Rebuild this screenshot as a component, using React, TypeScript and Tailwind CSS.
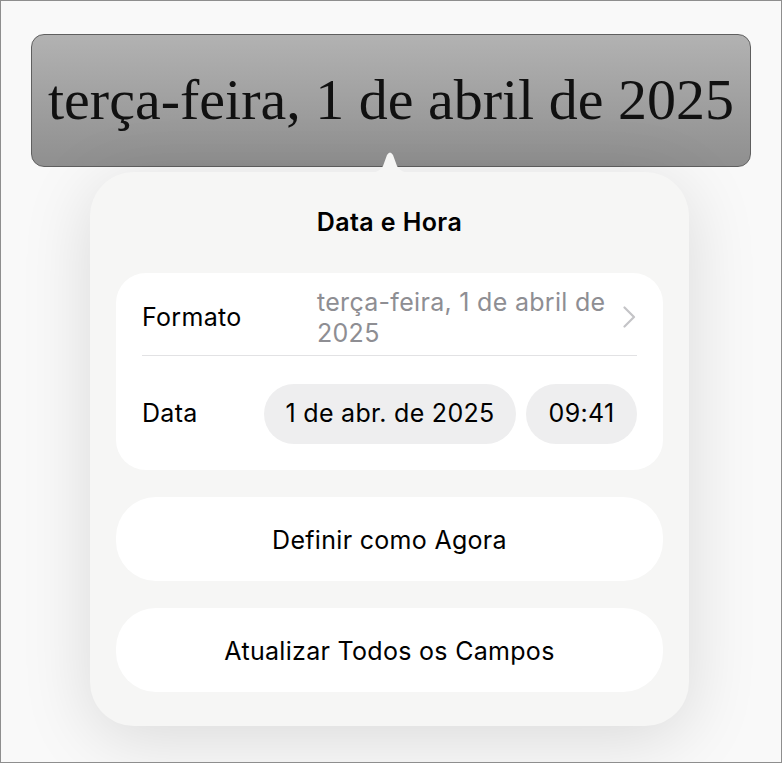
import React from "react";

const sans = "font-['Inter','Noto_Sans',sans-serif]";

function Chevron() {
  return (
    <svg width="13" height="22" viewBox="0 0 13 22" fill="none" className="shrink-0">
      <path d="M1.5 1.5 L11 11 L1.5 20.5" stroke="#c4c4c7" strokeWidth="2.2" strokeLinecap="round" strokeLinejoin="round" />
    </svg>
  );
}

function Pill({ children, className = "" }: { children: React.ReactNode; className?: string }) {
  return (
    <div className={`h-[60px] rounded-full bg-[#eeeeef] flex items-center justify-center text-[25px] tracking-[0.3px] text-black ${className}`}>
      {children}
    </div>
  );
}

function ActionButton({ label }: { label: string }) {
  return (
    <button className="h-[84px] w-full rounded-[40px] bg-white flex items-center justify-center pt-[4px] text-[25px] tracking-[0.3px] text-black">
      {label}
    </button>
  );
}

export default function App() {
  return (
    <div className={`w-[782px] h-[763px] border border-[#8e8e8e] bg-[#f9f9f9] overflow-hidden ${sans}`}>
      {/* campo de data selecionado */}
      <div className="mx-[30px] mt-[33px] h-[133px] rounded-[13px] border border-[#5f5f5f] bg-gradient-to-b from-[#b2b2b2] to-[#8f8f8f] flex items-center justify-center">
        <span className="font-['Liberation_Serif','DejaVu_Serif',serif] text-[58px] leading-none text-[#111] pb-[2px]">
          terça-feira, 1 de abril de 2025
        </span>
      </div>

      {/* popover */}
      <div className="relative ml-[89px] mt-[5px] w-[599px] h-[554px] rounded-[44px] bg-[#f6f6f5] shadow-[0_12px_70px_rgba(0,0,0,0.13)] px-[26px] pt-[35px]">
        <svg width="42" height="22" viewBox="0 0 42 22" className="absolute left-[279px] -top-[21px]">
          <path d="M0 22 C8 22 11 19 14 15 L18 4 Q21 -1 24 4 L28 15 C31 19 34 22 42 22 Z" fill="#f6f6f5" />
        </svg>

        <h2 className="text-center text-[25px] tracking-[0.4px] font-semibold text-black leading-[30px]">Data e Hora</h2>

        <div className="mt-[36px] rounded-[30px] bg-white px-[26px]">
          <div className="h-[83px] flex items-center border-b border-[#e2e2e4] pt-[8px]">
            <span className="w-[175px] text-[25px] tracking-[0.3px] text-black">Formato</span>
            <span className="flex-1 text-[25px] tracking-[0.3px] leading-[31px] text-[#8e8e93]">
              terça-feira, 1 de abril de 2025
            </span>
            <span className="ml-[12px] mr-[1px] pb-[2px]">
              <Chevron />
            </span>
          </div>
          <div className="h-[114px] flex items-center justify-between pt-[2px]">
            <span className="text-[25px] tracking-[0.3px] text-black">Data</span>
            <div className="flex gap-[10px]">
              <Pill className="w-[252px]">1 de abr. de 2025</Pill>
              <Pill className="w-[111px]">09:41</Pill>
            </div>
          </div>
        </div>

        <div className="mt-[27px] flex flex-col gap-[27px]">
          <ActionButton label="Definir como Agora" />
          <ActionButton label="Atualizar Todos os Campos" />
        </div>
      </div>
    </div>
  );
}
